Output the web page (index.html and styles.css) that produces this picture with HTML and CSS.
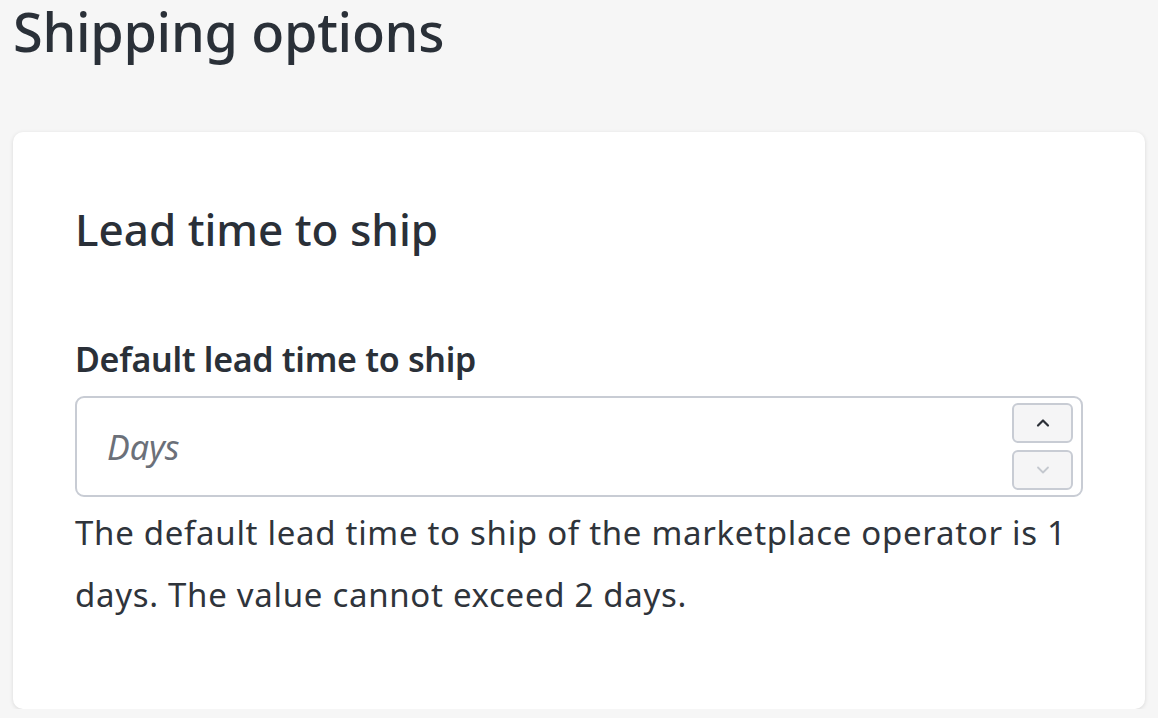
FILE: index.html
```html
<!DOCTYPE html>
<html lang="en">
<head>
<meta charset="utf-8">
<title>Shipping options</title>
<link rel="stylesheet" href="styles.css">
</head>
<body>
<main class="page">
  <h1 class="page-title">Shipping options</h1>
  <section class="card">
    <h2 class="card-title">Lead time to ship</h2>
    <div class="field">
      <label class="field-label" for="lead">Default lead time to ship</label>
      <div class="input-wrap">
        <input id="lead" class="input" type="text" placeholder="Days">
        <div class="spinner">
          <button class="spin-btn" type="button" aria-label="Increase">
            <svg width="14" height="10" viewBox="0 0 14 10"><path d="M2 7.5 L7 2.5 L12 7.5" fill="none" stroke="#2b3037" stroke-width="2.2" stroke-linecap="round" stroke-linejoin="round"/></svg>
          </button>
          <button class="spin-btn disabled" type="button" aria-label="Decrease">
            <svg width="14" height="10" viewBox="0 0 14 10"><path d="M2 2.5 L7 7.5 L12 2.5" fill="none" stroke="#c4c8cf" stroke-width="1.8" stroke-linecap="round" stroke-linejoin="round"/></svg>
          </button>
        </div>
      </div>
      <p class="help">The default lead time to ship of the marketplace operator is 1 days. The value cannot exceed 2 days.</p>
    </div>
  </section>
</main>
</body>
</html>
```
FILE: styles.css
```css
* { box-sizing: border-box; }
html, body { margin: 0; background: #f6f6f6; }
body {
  font-family: "Noto Sans", "Open Sans", sans-serif;
  color: #2a3038;
}
.page { padding: 0 13px; }
.page-title {
  margin: 0 0 70px;
  font-size: 54px;
  font-weight: 500;
  line-height: 62px;
  height: 62px;
  letter-spacing: -0.3px;
}
.card {
  background: #fff;
  border-radius: 10px;
  box-shadow: 0 1px 4px rgba(0,0,0,0.12);
  padding: 71px 62px 0 62px;
  height: 577px;
}
.card-title {
  margin: 0 0 84px;
  font-size: 44px;
  font-weight: 500;
  line-height: 52px;
}
.field-label {
  display: block;
  font-size: 34px;
  font-weight: 600;
  line-height: 40px;
  margin-bottom: 17px;
  letter-spacing: -0.3px;
}
.input-wrap {
  height: 101px;
  border: 2px solid #c8ccd4;
  border-radius: 9px;
  display: flex;
  align-items: center;
}
.input {
  flex: 1;
  min-width: 0;
  border: 0;
  outline: 0;
  height: 100%;
  background: transparent;
  padding: 0 30px;
  font-family: inherit;
  font-size: 34px;
  color: #2a3038;
}
.input::placeholder { color: #6b7079; font-style: italic; }
.spinner {
  display: flex;
  flex-direction: column;
  gap: 7px;
  padding-right: 8px;
}
.spin-btn {
  width: 61px;
  height: 40px;
  background: #f5f5f6;
  border: 2px solid #c8ccd4;
  border-radius: 6px;
  padding: 0;
  display: flex;
  align-items: center;
  justify-content: center;
}
.help {
  margin: 5px 0 0;
  font-size: 33px;
  line-height: 62px;
  letter-spacing: 0.7px;
  color: #2f343b;
}
```
